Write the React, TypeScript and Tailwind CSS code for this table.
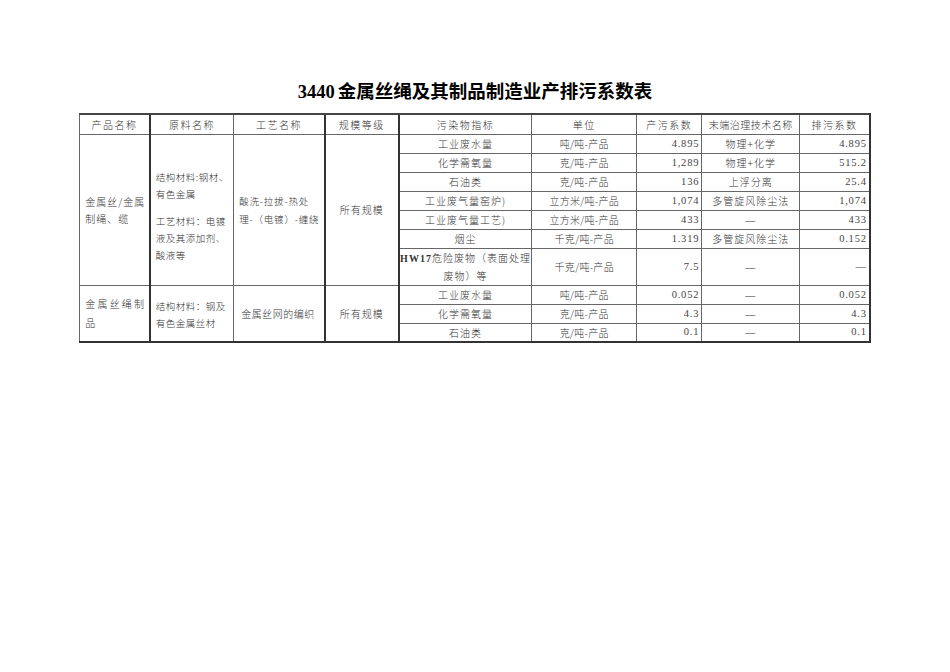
import React from 'react';

const cjk = { fontFamily: '"Noto Sans CJK SC", "Noto Sans", sans-serif' };
const num = { fontFamily: '"Liberation Serif", "Noto Sans CJK SC", serif' };

const cols = [70, 84, 91, 74, 133, 105, 65, 98, 70];

const headers = ['产品名称', '原料名称', '工艺名称', '规模等级', '污染物指标', '单位', '产污系数', '末端治理技术名称', '排污系数'];

type Row = { p: React.ReactNode; u: string; a: string; t: string; b: string; h?: string };

const group1: Row[] = [
  { p: '工业废水量', u: '吨/吨-产品', a: '4.895', t: '物理+化学', b: '4.895' },
  { p: '化学需氧量', u: '克/吨-产品', a: '1,289', t: '物理+化学', b: '515.2' },
  { p: '石油类', u: '克/吨-产品', a: '136', t: '上浮分离', b: '25.4' },
  { p: '工业废气量窑炉)', u: '立方米/吨-产品', a: '1,074', t: '多管旋风除尘法', b: '1,074' },
  { p: '工业废气量工艺)', u: '立方米/吨-产品', a: '433', t: '—', b: '433' },
  { p: '烟尘', u: '千克/吨-产品', a: '1.319', t: '多管旋风除尘法', b: '0.152' },
  {
    p: (
      <>
        <span style={num} className="font-bold">HW17</span>危险废物（表面处理
        <br />
        废物）等
      </>
    ),
    u: '千克/吨-产品', a: '7.5', t: '—', b: '—', h: 'h-[37px]',
  },
];

const group2: Row[] = [
  { p: '工业废水量', u: '吨/吨-产品', a: '0.052', t: '—', b: '0.052' },
  { p: '化学需氧量', u: '克/吨-产品', a: '4.3', t: '—', b: '4.3' },
  { p: '石油类', u: '克/吨-产品', a: '0.1', t: '—', b: '0.1' },
];

const bd = 'border border-[#666]';
const thickL = 'border-l-2 border-l-[#333]';

function Tail({ r }: { r: Row }) {
  return (
    <>
      <td className={`${bd} ${thickL} text-center tracking-[1px] leading-[17px]`}>{r.p}</td>
      <td className={`${bd} text-center tracking-[0.3px]`}>{r.u}</td>
      <td className={`${bd} text-right pr-[2px] tracking-[0.8px] text-[10.5px] text-[#444]`} style={num}>{r.a}</td>
      <td className={`${bd} text-center tracking-[1px]`}>{r.t === '—' ? <span style={num}>—</span> : r.t}</td>
      <td className={`${bd} border-r-2 border-r-[#333] text-right pr-[2px] tracking-[0.8px] text-[10.5px] text-[#444]`} style={num}>
        {r.b}
      </td>
    </>
  );
}

export default function App() {
  return (
    <div className="w-[950px] h-[672px] bg-white text-[#333]" style={cjk}>
      <h1 className="pt-[78px] h-[113px] text-center text-[18.5px] leading-[24px] font-bold text-black">
        <span style={num}>3440</span>
        <span className="ml-[3px]">金属丝绳及其制品制造业产排污系数表</span>
      </h1>
      <table className="mx-auto border-collapse table-fixed text-[10px] font-light" style={{ width: 790 }}>
        <colgroup>
          {cols.map((w, i) => (
            <col key={i} style={{ width: w }} />
          ))}
        </colgroup>
        <thead>
          <tr className="h-[20px]">
            {headers.map((h, i) => (
              <th
                key={h}
                className={`${bd} font-light text-center ${i === 7 ? 'tracking-[0.5px]' : 'tracking-[1.5px]'} ${i === 1 || i === 3 || i === 4 ? thickL : ''} ${i === 8 ? 'border-r-2 border-r-[#333]' : ''} border-t-2 border-t-[#444]`}
              >
                {h}
              </th>
            ))}
          </tr>
        </thead>
        <tbody>
          {group1.map((r, i) => (
            <tr key={i} className={r.h ?? 'h-[19px]'}>
              {i === 0 && (
                <>
                  <td rowSpan={7} className={`${bd} align-middle pl-[5px] text-left leading-[17px] tracking-[1px]`}>
                    金属丝/金属
                    <br />
                    制绳、缆
                  </td>
                  <td rowSpan={7} className={`${bd} ${thickL} align-middle pl-[5px] text-left leading-[17px] text-[9.5px] tracking-[0.5px]`}>
                    <div className="pt-[14px]">
                      结构材料:钢材、
                      <br />
                      有色金属
                    </div>
                    <div className="mt-[10px]">
                      工艺材料：电镀
                      <br />
                      液及其添加剂、
                      <br />
                      酸液等
                    </div>
                  </td>
                  <td rowSpan={7} className={`${bd} align-middle pl-[5px] text-left leading-[18px] text-[9.5px] tracking-[0.8px]`}>
                    酸洗-拉拔-热处
                    <br />
                    理-（电镀）-缠绕
                  </td>
                  <td rowSpan={7} className={`${bd} ${thickL} align-middle text-center tracking-[1px]`}>
                    所有规模
                  </td>
                </>
              )}
              <Tail r={r} />
            </tr>
          ))}
          {group2.map((r, i) => (
            <tr key={i} className={`h-[19px] ${i === 2 ? 'border-b-2 border-b-[#333]' : ''}`}>
              {i === 0 && (
                <>
                  <td rowSpan={3} className={`${bd} align-middle pl-[5px] text-left leading-[19px] tracking-[2.2px] whitespace-nowrap`}>
                    金属丝绳制
                    <br />
                    品
                  </td>
                  <td rowSpan={3} className={`${bd} ${thickL} align-middle pl-[5px] text-left leading-[17px] text-[9.5px] tracking-[0.5px]`}>
                    <div className="pt-[4px]">
                      结构材料：钢及
                      <br />
                      有色金属丝材
                    </div>
                  </td>
                  <td rowSpan={3} className={`${bd} align-middle pl-[7px] text-left tracking-[0.5px]`}>
                    金属丝网的编织
                  </td>
                  <td rowSpan={3} className={`${bd} ${thickL} align-middle text-center tracking-[1px]`}>
                    所有规模
                  </td>
                </>
              )}
              <Tail r={r} />
            </tr>
          ))}
        </tbody>
      </table>
    </div>
  );
}
